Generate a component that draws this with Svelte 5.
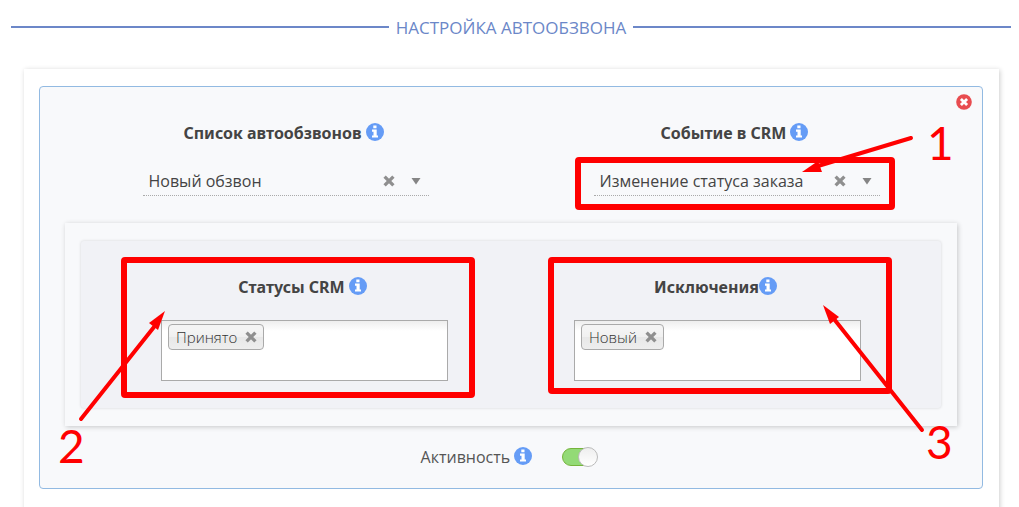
<script>
  const calls = ['Новый обзвон', 'Повторный обзвон'];
  const events = ['Изменение статуса заказа', 'Новый заказ'];
  let call = $state('Новый обзвон');
  let event = $state('Изменение статуса заказа');
  let statuses = $state(['Принято']);
  let exclusions = $state(['Новый']);
  let active = $state(true);
</script>

{#snippet info()}
  <svg class="info" viewBox="0 0 18 18" aria-hidden="true">
    <circle cx="9" cy="9" r="9" fill="#659cf6" />
    <path d="M7.3 2.6h3.2v2.6H7.3zM6 6.6h4.7v5.8H12v2.2H6v-2.2h1.5V8.8H6z" fill="#fff" />
  </svg>
{/snippet}

{#snippet cross()}
  <svg class="cross" viewBox="0 0 12 12" aria-hidden="true">
    <path d="M1.6 1.6l8.8 8.8M10.4 1.6l-8.8 8.8" stroke="#8f8f8f" stroke-width="3.3" />
  </svg>
{/snippet}

<main>
  <h1>Настройка автообзвона</h1>

  <div class="sheet">
    <section class="card">
      <button class="remove" aria-label="Удалить">
        <svg viewBox="0 0 16 16" aria-hidden="true">
          <circle cx="8" cy="8" r="7.8" fill="#e84c50" />
          <path d="M4.9 4.9l6.2 6.2M11.1 4.9l-6.2 6.2" stroke="#fff" stroke-width="2.8" />
        </svg>
      </button>

      <div class="columns">
        <div class="field">
          <label class="title" for="call">Список автообзвонов <span>{@render info()}</span></label>
          <div class="picker">
            <select id="call" bind:value={call}>
              {#each calls as item}<option>{item}</option>{/each}
            </select>
            <button class="clear" aria-label="Очистить">{@render cross()}</button>
            <svg class="arrow" viewBox="0 0 10 8" aria-hidden="true"><path d="M.5 1h9L5 7.6z" fill="#858585" /></svg>
          </div>
        </div>
        <div class="field">
          <label class="title" for="event">Событие в CRM <span>{@render info()}</span></label>
          <div class="picker">
            <select id="event" bind:value={event}>
              {#each events as item}<option>{item}</option>{/each}
            </select>
            <button class="clear" aria-label="Очистить">{@render cross()}</button>
            <svg class="arrow" viewBox="0 0 10 8" aria-hidden="true"><path d="M.5 1h9L5 7.6z" fill="#858585" /></svg>
            <svg class="note" width="286" height="30" aria-hidden="true">
              <rect x="-16" y="-6" width="314" height="47" rx="1" />
              <path class="shaft" d="M317-28L224 0" />
              <path class="head" d="M208 6L224-5l4 11z" />
              <text x="333" y="-6">1</text>
            </svg>
          </div>
        </div>
      </div>

      <div class="well">
        <div class="columns panel">
          <div class="field">
            <label class="title" for="statuses">Статусы CRM <span>{@render info()}</span></label>
            <div class="tags">
              {#each statuses as tag, i}
                <span class="tag">{tag}<button aria-label="Убрать" onclick={() => statuses.splice(i, 1)}>{@render cross()}</button></span>
              {/each}
              <input id="statuses" type="text" />
              <svg class="note" width="287" height="61" aria-hidden="true">
                <rect x="-38" y="-61" width="348" height="135" rx="1" />
                <path class="shaft" d="M-81 98L-8 6" />
                <path class="head" d="M3-10L-13 2l9 7z" />
                <text x="-104" y="142">2</text>
              </svg>
            </div>
          </div>
          <div class="field">
            <label class="title" for="exclusions">Исключения<span>{@render info()}</span></label>
            <div class="tags">
              {#each exclusions as tag, i}
                <span class="tag">{tag}<button aria-label="Убрать" onclick={() => exclusions.splice(i, 1)}>{@render cross()}</button></span>
              {/each}
              <input id="exclusions" type="text" />
              <svg class="note" width="287" height="61" aria-hidden="true">
                <rect x="-24" y="-61" width="338" height="131" rx="1" />
                <path class="shaft" d="M347 109L259-2" />
                <path class="head" d="M248-16L264-4l-9 7z" />
                <text x="351" y="138">3</text>
              </svg>
            </div>
          </div>
        </div>
      </div>

      <div class="activity">
        <label for="active">Активность <span>{@render info()}</span></label>
        <input id="active" class="switch" type="checkbox" role="switch" bind:checked={active} />
      </div>
    </section>
  </div>
</main>

<style>
  :global(body) {
    margin: 0;
    background: #fff;
    overflow: hidden;
  }
  main {
    font: 16px/24px "Open Sans", "Noto Sans", sans-serif;
    color: #444;
  }
  h1 {
    display: flex;
    align-items: center;
    gap: 7px;
    margin: 0;
    padding: 16px 8px 0 11px;
    font-size: 17px;
    line-height: 24px;
    font-weight: 400;
    text-transform: uppercase;
    color: #6b87c8;
  }
  h1::before,
  h1::after {
    content: "";
    flex: 1;
    height: 2px;
    margin-bottom: 3px;
    background: #6c87c8;
  }
  button {
    padding: 0;
    border: 0;
    background: none;
    cursor: pointer;
  }
  svg {
    display: block;
  }
  .sheet {
    margin: 29px 20px 0 24px;
    padding: 17px 16px 30px 15px;
    box-shadow: 1px 1px 5px rgba(0, 0, 0, 0.2);
  }
  .card {
    position: relative;
    padding: 34px 20px 19px;
    border: 1px solid #92bae2;
    border-radius: 4px;
    background: #f8f9fb;
  }
  .remove {
    position: absolute;
    top: 7px;
    right: 10px;
    width: 16px;
    height: 16px;
  }
  .columns {
    display: grid;
    grid-template-columns: 1fr 1fr;
  }
  .field {
    display: flex;
    flex-direction: column;
    align-items: center;
    gap: 21px;
  }
  .title {
    font-family: "Noto Sans", "Open Sans", sans-serif;
    font-weight: 700;
    white-space: pre;
    padding-right: 4px;
  }
  .info {
    display: inline-block;
    width: 18px;
    height: 18px;
    vertical-align: -2px;
  }
  .picker {
    position: relative;
    display: grid;
    grid-template-columns: 1fr 12px 10px;
    gap: 16px;
    align-items: center;
    box-sizing: border-box;
    width: 286px;
    padding-right: 8px;
    border-bottom: 1px dotted #aaa;
  }
  select {
    grid-area: 1 / 1 / 2 / 4;
    height: 29px;
    padding: 1px 0 0 6px;
    border: 0;
    appearance: none;
    background: none;
    font: inherit;
    color: #444;
  }
  .clear {
    grid-area: 1 / 2;
  }
  .arrow {
    grid-area: 1 / 3;
    width: 10px;
    height: 8px;
  }
  .cross {
    width: 12px;
    height: 12px;
  }
  .well {
    margin: 27px 5px 0;
    padding: 18px 16px;
    box-shadow: 1px 1px 5px rgba(0, 0, 0, 0.2);
  }
  .panel {
    padding: 34px 17px 27px;
    border-radius: 3px;
    background: #f1f2f6;
    box-shadow: 0 0 3px rgba(0, 0, 0, 0.15);
  }
  .tags {
    position: relative;
    display: flex;
    align-items: flex-start;
    box-sizing: border-box;
    width: 287px;
    height: 61px;
    padding: 3px 6px;
    border: 1px solid #aaa;
    background: linear-gradient(#eee, #fff 10px);
  }
  .tags input {
    flex: 1;
    min-width: 0;
    height: 26px;
    border: 0;
    background: none;
    font: inherit;
    outline: 0;
  }
  .tag {
    display: flex;
    align-items: center;
    gap: 8px;
    box-sizing: border-box;
    height: 26px;
    padding: 0 6px 0 7px;
    border: 1px solid #aaa;
    border-radius: 4px;
    background: linear-gradient(#f4f4f4 20%, #f0f0f0 50%, #e8e8e8 52%, #eee);
    font-size: 15px;
    font-weight: 350;
    color: #333;
  }
  .activity {
    display: flex;
    justify-content: center;
    align-items: center;
    gap: 30px;
    padding: 19px 4px 0 0;
    color: #555;
  }
  .switch {
    appearance: none;
    position: relative;
    box-sizing: border-box;
    width: 35px;
    height: 18px;
    margin: 0;
    border: 1px solid #76b43c;
    border-radius: 9px;
    background: #93da76;
  }
  .switch::after {
    content: "";
    position: absolute;
    top: -2px;
    right: -2px;
    box-sizing: border-box;
    width: 20px;
    height: 20px;
    border: 1px solid #bbb;
    border-radius: 50%;
    background: linear-gradient(#eee, #fff);
  }
  .switch:not(:checked) {
    background: #ddd;
    border-color: #bbb;
  }
  .switch:not(:checked)::after {
    right: 15px;
  }
  .note {
    position: absolute;
    top: 0;
    left: 0;
    overflow: visible;
    pointer-events: none;
    z-index: 1;
  }
  .note rect {
    fill: none;
    stroke: #f00;
    stroke-width: 6;
    stroke-linejoin: round;
  }
  .shaft {
    stroke: #f00;
    stroke-width: 4;
    stroke-linecap: round;
  }
  .head,
  .note text {
    fill: #f00;
  }
  .note text {
    font-family: Lato, sans-serif;
    font-size: 46px;
    font-weight: 400;
  }
</style>
